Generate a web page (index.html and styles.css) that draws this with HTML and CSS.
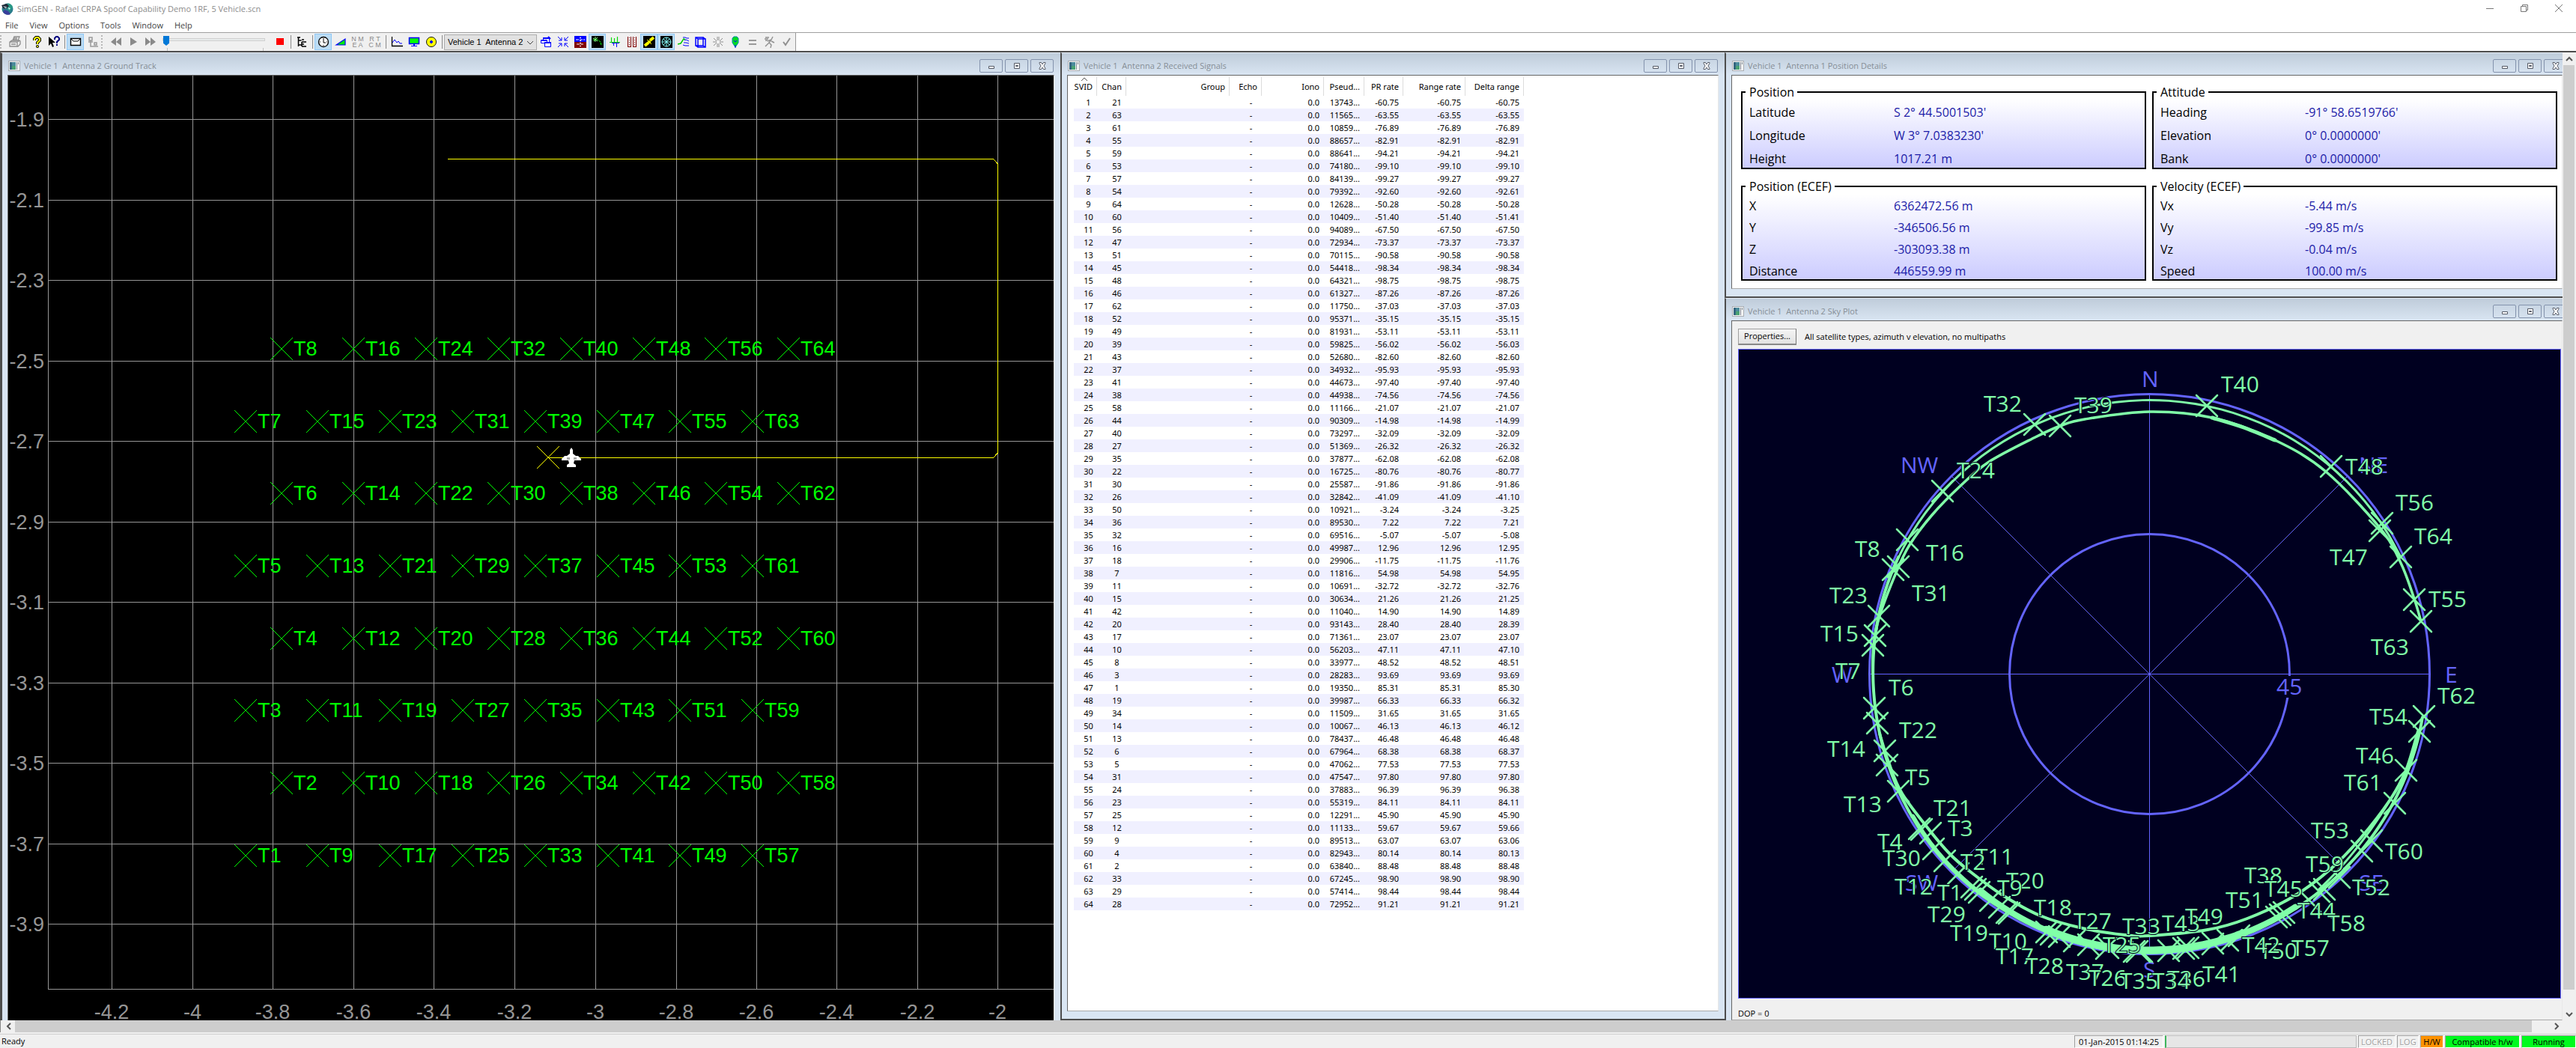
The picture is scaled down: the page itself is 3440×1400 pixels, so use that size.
FILE: index.html
```html
<!DOCTYPE html>
<html lang="en">
<head>
<meta charset="utf-8">
<title>SimGEN - Rafael CRPA Spoof Capability Demo 1RF, 5 Vehicle.scn</title>
<link rel="stylesheet" href="styles.css">
</head>
<body>
<svg class="defs" aria-hidden="true">
  <symbol id="i-win" viewBox="0 0 16 14">
    <rect x="0.5" y="0.5" width="15" height="13" fill="#f4f4f4" stroke="#a8adb3"/>
    <rect x="2" y="2" width="8" height="10" fill="#4d8c9c"/><path d="M2 2h3v10H2z" fill="#35667f"/><path d="M5 7h5v5H5z" fill="#4aa273"/>
    <path d="M11 2h1v10h-1zM13 2h1v3h-1z" fill="#7f8a94"/>
  </symbol>
  <symbol id="i-min" viewBox="0 0 12 12"><path d="M2.500 6.500h7v3h-7z" fill="#fff" stroke="#555a66"/></symbol>
  <symbol id="i-max" viewBox="0 0 12 12"><path d="M2.500 2.500h7v7h-7z" fill="#fff" stroke="#555a66"/><path d="M4.500 5.500h3v1h-3z" fill="#c6d4e3" stroke="#555a66"/></symbol>
  <symbol id="i-close" viewBox="0 0 12 12"><path d="M2 1.500h2.500L6 4l1.500-2.500H10v1L8 6l2 3.500v1H7.500L6 8l-1.500 2.500H2v-1L4 6 2 2.500z" fill="#fff" stroke="#555a66"/></symbol>
</svg>

<header class="titlebar">
  <svg class="logo" viewBox="0 0 16 16" aria-hidden="true"><circle cx="8" cy="8" r="7.500" fill="#2b7d8c"/><path d="M8 .5a7.500 7.500 0 0 1 7 5l-4 6-4-5z" fill="#2a9a86"/><path d="M4 9l5 2 3 4a7.500 7.500 0 0 1-10-3z" fill="#3a3f9b"/><path d="M0 3l7-2 3 3-4 4-4-1z" fill="#222b38"/><path d="M2 4l5 1-1 3z" fill="#9fb7c0"/><path d="M9 6l3 1-2 2z" fill="#dff"/></svg>
  <h1>SimGEN - Rafael CRPA Spoof Capability Demo 1RF, 5 Vehicle.scn</h1>
  <div class="sysbuttons">
    <button aria-label="Minimize"><svg viewBox="0 0 10 10"><path d="M0 5.500h10"/></svg></button>
    <button aria-label="Restore"><svg viewBox="0 0 10 10"><path d="M.5 2.500h7v7h-7zM2.500 2.500v-2h7v7h-2"/></svg></button>
    <button aria-label="Close"><svg viewBox="0 0 10 10"><path d="M0 0l10 10M10 0L0 10"/></svg></button>
  </div>
</header>

<nav class="menubar">
  <button>File</button><button>View</button><button>Options</button><button>Tools</button><button>Window</button><button>Help</button>
</nav>

<div class="toolstrip">
 <div class="toolbar">
  <i class="grip"></i>
  <button aria-label="Print"><svg viewBox="0 0 16 16"><path d="M5 6l2-5h7l-2 5M1 8l3-2h9l2 1v4l-3 3H1zM1 8h10v6M11 8l4-2M3 11h6M6 3h5M6 5h5" fill="none" stroke="#8d8d8d" stroke-width="1.300"/></svg></button>
  <i class="sep"></i>
  <button aria-label="Help"><svg viewBox="0 0 16 16"><path d="M5 6V4l2-2h3l2 2v2l-3 3v2" fill="none" stroke="#000" stroke-width="4"/><path d="M5 6V4l2-2h3l2 2v2l-3 3v2" fill="none" stroke="#ff0" stroke-width="2"/><circle cx="9" cy="14" r="2" fill="#000"/><circle cx="9" cy="14" r="1" fill="#ff0"/></svg></button>
  <button aria-label="Context help"><svg viewBox="0 0 16 16"><path d="M1 1v12l3-3 2 5 2-1-2-5h4z" fill="#000"/><path d="M9 5V3l2-2h2l2 2v2l-3 3v2M11 12h2" fill="none" stroke="#000080" stroke-width="2"/></svg></button>
  <i class="sep"></i>
  <button class="on" aria-label="Messages"><svg viewBox="0 0 16 16"><path d="M1.500 3.500h13v9h-13z" fill="#fff" stroke="#000" stroke-width="1.400"/><path d="M2 4l3 3h6l3-3" fill="none" stroke="#000"/></svg></button>
  <button aria-label="Network"><svg viewBox="0 0 16 16"><path d="M3 2h4v4H3zM2 8h6M5 6v8h4M10 9h3v3h-3zM9 14h6" fill="none" stroke="#9a9a9a" stroke-width="1.500"/></svg></button>
  <i class="grip"></i>
  <button aria-label="Rewind"><svg viewBox="0 0 16 16"><path d="M8 2v11L1 8zM15 2v11L8 8z" fill="#8a8a8a"/></svg></button>
  <button aria-label="Play"><svg viewBox="0 0 16 16"><path d="M4 2l9 6-9 5z" fill="#8a8a8a"/></svg></button>
  <button aria-label="Fast forward"><svg viewBox="0 0 16 16"><path d="M1 2l7 6-7 5zM8 2l7 6-7 5z" fill="#8a8a8a"/></svg></button>
  <div class="slider"><input type="range" min="0" max="100" value="0" aria-label="Run position"></div>
  <button aria-label="Stop"><svg viewBox="0 0 16 16"><path d="M3 3h10v9H3z" fill="#f00"/></svg></button>
  <i class="sep"></i>
  <button aria-label="Source tree"><svg viewBox="0 0 16 16"><path d="M2 2h4M3.500 2v12M3.500 6h4M3.500 12h5M8 5h3M8 8h6M8 11h3M8 14h6M8 8v6" fill="none" stroke="#000" stroke-width="1.500"/></svg></button>
  <i class="sep"></i>
  <button class="on" aria-label="Clock"><svg viewBox="0 0 16 16"><circle cx="8" cy="8" r="6.500" fill="#fff" stroke="#000" stroke-width="1.300"/><path d="M8 3v6h3" fill="none" stroke="#000"/><path d="M3 8h1M12 8h1M8 12v1" stroke="#000"/></svg></button>
  <button aria-label="Power levels"><svg viewBox="0 0 16 16"><path d="M2 12L14 4v8z" fill="#0e0" stroke="#00f" stroke-width="1.200"/></svg></button>
  <button class="mini" aria-label="NMEA"><span>N M</span><span>E A</span></button>
  <button class="mini" aria-label="RTCM"><span>R T</span><span>C M</span></button>
  <i class="sep"></i>
  <button aria-label="Graph"><svg viewBox="0 0 16 16"><path d="M1.500 1v12.500H16" fill="none" stroke="#000" stroke-width="1.300"/><path d="M2 9l3-4 3 4 2-2 2 3 3 0" fill="none" stroke="#00f"/></svg></button>
  <button aria-label="Display"><svg viewBox="0 0 16 16"><path d="M1.500 2.500h13v8h-13z" fill="#0f0" stroke="#00f" stroke-width="1.500"/><path d="M7 11h2v2h3v1H4v-1h3z" fill="#00f"/></svg></button>
  <button aria-label="Constellation"><svg viewBox="0 0 16 16"><circle cx="8" cy="8" r="6.500" fill="#ff0" stroke="#111"/><path d="M6 8h4M8 6v4" stroke="#00f" stroke-width="2"/></svg></button>
  <i class="sep"></i>
  <div class="combo"><select aria-label="Vehicle and antenna"><option>Vehicle 1&nbsp; Antenna 2</option></select><svg viewBox="0 0 10 6" aria-hidden="true"><path d="M1 1l4 4 4-4" fill="none" stroke="#444"/></svg></div>
  <button aria-label="Cascade"><svg viewBox="0 0 16 16"><g fill="#fff" stroke="#00f"><path d="M4.500 2.500h8v6h-8z"/><path d="M1.500 5.500h8v4h-8z"/><path d="M6.500 8.500h8v6h-8z"/></g><path d="M4 3h9M6 9h9M2 6h7M11 1l3 3" stroke="#00f" stroke-width="2"/></svg></button>
  <button aria-label="Collapse"><svg viewBox="0 0 16 16"><path d="M1 1l5 5M2 6h4V2M15 1l-5 5M14 6h-4V2M1 15l5-5M2 10h4v4M15 15l-5-5M14 10h-4v4" fill="none" stroke="#00f"/></svg></button>
  <button aria-label="Split"><svg viewBox="0 0 16 16"><path d="M0 0h16v8H0z" fill="#00f"/><path d="M0 8h16v8H0z" fill="#800000"/><path d="M2 5h12M3 11h10" stroke="#fff" stroke-dasharray="4 1"/><path d="M7 2h2v1H7zM7 6h2v1H7zM7 9h2v1H7zM7 13h2v1H7z" fill="#fff"/></svg></button>
  <button class="on" aria-label="Ground track"><svg viewBox="0 0 16 16"><path d="M0 0h16v16H0z"/><path d="M2 5h6l4 3 1 5" fill="none" stroke="#0f0" stroke-dasharray="3 1"/><path d="M5 1v7M2 3l6 4M8 2L3 7" stroke="#8f8"/></svg></button>
  <button aria-label="Signal bars"><svg viewBox="0 0 16 16"><path d="M1 8.500h14M3.500 8V2M7.500 8V3M11.500 8V1" stroke="#0d0" stroke-width="1.200"/><path d="M4 9.500h10M6.500 9v4M10.500 9v6" stroke="#00f"/></svg></button>
  <button aria-label="Channels"><svg viewBox="0 0 16 16"><path d="M2.500 1v13M6.500 1v13M9.500 1v13M13.500 1v13M2 14.500h5M9 14.500h5" stroke="#800000"/><path d="M4.500 2v11M11.500 2v11" stroke="#800000" stroke-dasharray="1 2"/></svg></button>
  <button class="on" aria-label="Satellite"><svg viewBox="0 0 16 16"><path d="M0 0h16v16H0z"/><path d="M2 13l5-4M9 6l5-4" stroke="#ff0" stroke-width="4"/><path d="M5 5l6 6" stroke="#ff0" stroke-width="1"/><circle cx="8" cy="8" r="2" fill="#ff0"/></svg></button>
  <button class="on" aria-label="Sky plot"><svg viewBox="0 0 16 16"><path d="M0 0h16v16H0z"/><circle cx="8" cy="8" r="6" fill="none" stroke="#8ff"/><path d="M8 2v12M2 8h12M4 4l8 8M12 4l-8 8" stroke="#8ff"/></svg></button>
  <button aria-label="Antenna pattern"><svg viewBox="0 0 16 16"><path d="M0 11l4-1 4-6 2 1" fill="none" stroke="#0c0" stroke-width="1.500"/><path d="M7 2h3l2 1h3M9 6l2-1 4 2M8 9l3 0 4 1M7 12l3 1h5" fill="none" stroke="#00f"/></svg></button>
  <button aria-label="Attitude cube"><svg viewBox="0 0 16 16"><path d="M1 2h10v11H1zM4 4h10v11H4zM1 2l3 2M11 2l3 2M11 13l3 2M1 13l3 2" fill="none" stroke="#00f" stroke-width="1.500"/></svg></button>
  <button aria-label="Burst"><svg viewBox="0 0 16 16"><path d="M7 1v5M9 1v5M7 10v5M9 10v5M1 8h5M10 8h5M2 3l4 4M14 3l-4 4M2 13l4-4M14 13l-4-4" stroke="#909090"/></svg></button>
  <button aria-label="Waypoint"><svg viewBox="0 0 16 16"><path d="M8 15L4 9V3l2-2h4l2 2v6z" fill="#0d2" stroke="#08a"/><path d="M8 16v-4M6 6l2 2 2-2" stroke="#00f" fill="none"/></svg></button>
  <button aria-label="Equals"><svg viewBox="0 0 16 16"><path d="M3 6h10M3 11h10" stroke="#9a9a9a" stroke-width="2"/></svg></button>
  <button aria-label="Motion"><svg viewBox="0 0 16 16"><path d="M12 1l-2 4-5 2M10 5l-3 4 3 3-1 4M7 9l-5 5M10 7l4 2M2 2h5M1 4h5M2 6h3" fill="none" stroke="#909090" stroke-width="1.400"/></svg></button>
  <button aria-label="Apply"><svg viewBox="0 0 16 16"><path d="M3 8l3 4 6-9" fill="none" stroke="#909090" stroke-width="2"/></svg></button>
 </div>
</div>

<main class="workspace">
 <div class="desktop">
  <section class="win ground">
    <header><svg class="wicon"><use href="#i-win"/></svg><h2>Vehicle 1&nbsp; Antenna 2 Ground Track</h2>
      <div class="wbtns"><button aria-label="Minimize"><svg><use href="#i-min"/></svg></button><button aria-label="Maximize"><svg><use href="#i-max"/></svg></button><button aria-label="Close"><svg><use href="#i-close"/></svg></button></div></header>
    <div class="client black"><svg id="track" viewBox="11 101 1396 1262" preserveAspectRatio="xMinYMin slice" role="img" aria-label="Ground track"></svg></div>
  </section>

  <section class="win signals">
    <header><svg class="wicon"><use href="#i-win"/></svg><h2>Vehicle 1&nbsp; Antenna 2 Received Signals</h2>
      <div class="wbtns"><button aria-label="Minimize"><svg><use href="#i-min"/></svg></button><button aria-label="Maximize"><svg><use href="#i-max"/></svg></button><button aria-label="Close"><svg><use href="#i-close"/></svg></button></div></header>
    <div class="client">
      <table>
        <colgroup><col class="c31"><col class="c39"><col class="c138"><col class="c43"><col class="c83"><col class="c54"><col class="c52"><col class="c83"><col class="c78"></colgroup>
        <thead><tr><th class="sorted">SVID<svg viewBox="0 0 8 5" aria-hidden="true"><path d="M0 4l4-4 4 4" fill="none" stroke="#555"/></svg></th><th>Chan</th><th>Group</th><th>Echo</th><th>Iono</th><th>Pseud...</th><th>PR rate</th><th>Range rate</th><th>Delta range</th></tr></thead>
        <tbody id="signals"></tbody>
      </table>
    </div>
  </section>

  <div class="stack">
   <section class="win position">
    <header><svg class="wicon"><use href="#i-win"/></svg><h2>Vehicle 1&nbsp; Antenna 1 Position Details</h2>
      <div class="wbtns"><button aria-label="Minimize"><svg><use href="#i-min"/></svg></button><button aria-label="Maximize"><svg><use href="#i-max"/></svg></button><button aria-label="Close"><svg><use href="#i-close"/></svg></button></div></header>
    <div class="client groups">
      <fieldset><legend>Position</legend><dl><dt>Latitude</dt><dd>S 2° 44.5001503'</dd><dt>Longitude</dt><dd>W 3° 7.0383230'</dd><dt>Height</dt><dd>1017.21 m</dd></dl></fieldset>
      <fieldset><legend>Attitude</legend><dl><dt>Heading</dt><dd>-91° 58.6519766'</dd><dt>Elevation</dt><dd>0° 0.0000000'</dd><dt>Bank</dt><dd>0° 0.0000000'</dd></dl></fieldset>
      <fieldset class="four"><legend>Position (ECEF)</legend><dl><dt>X</dt><dd>6362472.56 m</dd><dt>Y</dt><dd>-346506.56 m</dd><dt>Z</dt><dd>-303093.38 m</dd><dt>Distance</dt><dd>446559.99 m</dd></dl></fieldset>
      <fieldset class="four"><legend>Velocity (ECEF)</legend><dl><dt>Vx</dt><dd>-5.44 m/s</dd><dt>Vy</dt><dd>-99.85 m/s</dd><dt>Vz</dt><dd>-0.04 m/s</dd><dt>Speed</dt><dd>100.00 m/s</dd></dl></fieldset>
    </div>
   </section>
   <section class="win sky">
    <header><svg class="wicon"><use href="#i-win"/></svg><h2>Vehicle 1&nbsp; Antenna 2 Sky Plot</h2>
      <div class="wbtns"><button aria-label="Minimize"><svg><use href="#i-min"/></svg></button><button aria-label="Maximize"><svg><use href="#i-max"/></svg></button><button aria-label="Close"><svg><use href="#i-close"/></svg></button></div></header>
    <div class="client gray">
      <div class="skybar"><button>Properties...</button><span>All satellite types, azimuth v elevation, no multipaths</span></div>
      <div class="skyplot"><svg id="sky" viewBox="2322 467 1097 866" preserveAspectRatio="xMidYMid meet" role="img" aria-label="Sky plot"></svg></div>
      <p class="dop">DOP = 0</p>
    </div>
   </section>
  </div>
 </div>
 <div class="vscroll"><button aria-label="Scroll up"><svg viewBox="0 0 10 10"><path d="M1 7l4-4 4 4"/></svg></button><div class="thumb"></div><button aria-label="Scroll down"><svg viewBox="0 0 10 10"><path d="M1 3l4 4 4-4"/></svg></button></div>
 <div class="hscroll"><button aria-label="Scroll left"><svg viewBox="0 0 10 10"><path d="M7 1L3 5l4 4"/></svg></button><div class="thumb"></div><button aria-label="Scroll right"><svg viewBox="0 0 10 10"><path d="M3 1l4 4-4 4"/></svg></button></div>
</main>

<footer class="status">
  <span class="ready">Ready</span>
  <span class="pane date">01-Jan-2015 01:14:25</span>
  <span class="pane progress"></span>
  <span class="pane off locked">LOCKED</span>
  <span class="pane off log">LOG</span>
  <span class="pane hw">H/W</span>
  <span class="pane ok compat">Compatible h/w</span>
  <span class="pane ok running">Running</span>
</footer>
<script src="script.js"></script>
</body>
</html>
```
FILE: styles.css
```css
* { box-sizing: border-box; }
html, body { height: 100%; }
body {
  margin: 0;
  display: flex;
  flex-direction: column;
  min-height: 600px;
  background: #fff;
  color: #000;
  font: 11px/16px "Open Sans", "Noto Sans", sans-serif;
  overflow: hidden;
}
h1, h2, p, dl, dd { margin: 0; font-weight: normal; }
button { font: inherit; color: inherit; padding: 0; border: 0; background: none; }
.defs { position: absolute; width: 0; height: 0; }

.titlebar { display: flex; align-items: center; height: 24px; padding-left: 2px; gap: 5px; color: #8c8c8c; background: #fff; flex: none; }
.titlebar h1 { font-size: 11px; line-height: 16px; }
.logo { width: 16px; height: 16px; }
.sysbuttons { margin-left: auto; display: flex; }
.sysbuttons button { width: 46px; height: 20px; }
.sysbuttons svg { width: 10px; height: 10px; fill: none; stroke: #777; }

.menubar { display: flex; gap: 15px; padding-left: 7px; height: 19px; color: #444; flex: none; }
.menubar button { line-height: 18px; }

.toolstrip { flex: none; height: 27px; border-top: 1px solid #a0a0a0; border-bottom: 2px solid #4d4d4d; display: flex; background: #fff; }
.toolbar { display: flex; align-items: center; background: #f0f0f0; border-right: 1px solid #999; }
.toolbar button { width: 23px; height: 22px; display: flex; align-items: center; justify-content: center; flex: none; }
.toolbar button svg { width: 16px; height: 16px; }
.toolbar button.on { background: #bcdcf4; border: 1px solid #90c8f6; }
.toolbar button.mini { flex-direction: column; font: 9px/8px "Liberation Sans", sans-serif; color: #8a8a8a; }
.grip { width: 8px; height: 18px; border-left: 2px dotted #b8b8b8; border-right: 4px solid transparent; }
.sep { width: 6px; height: 18px; background: linear-gradient(#8a8a8a, #8a8a8a) center / 1px 100% no-repeat; }
.slider { width: 150px; height: 23px; padding: 2px 8px 0 5px; position: relative; }
.slider::after { content: ""; position: absolute; left: 11px; right: 10px; bottom: 0; height: 4px; border: solid #c0c0c0; border-width: 0 1px; }
.slider input { appearance: none; display: block; width: 100%; height: 13px; margin: 0; background: none; }
.slider input::-webkit-slider-runnable-track { height: 4px; background: #e7eaea; border: 1px solid #d0d0d0; }
.slider input::-webkit-slider-thumb { appearance: none; width: 8px; height: 13px; margin-top: -4px; background: #0078d7; clip-path: polygon(0 0, 100% 0, 100% 75%, 50% 100%, 0 75%); }
.combo { position: relative; width: 124px; height: 21px; }
.combo select { appearance: none; width: 100%; height: 100%; padding: 0 4px; border: 1px solid #adadad; border-radius: 0; background: #e1e1e1; color: #000; font: 11px/16px "Liberation Sans", Arial, sans-serif; }
.combo svg { position: absolute; right: 4px; top: 8px; width: 10px; height: 6px; }

.workspace { flex: 1; min-height: 0; display: grid; grid-template: minmax(0, 1fr) 18px / minmax(0, 1fr) 18px; background: #f0f0f0; }
.desktop { display: grid; grid-template: minmax(0, 1fr) / minmax(0, 1416fr) minmax(0, 887fr) minmax(0, 1119fr); background: #fff; overflow: hidden; }

.win { display: flex; flex-direction: column; min-height: 0; min-width: 0; border-left: 2px solid #4d4d4d; border-top: 1px solid #e6edf5; padding: 0 8px 10px 7px; background: #d9e5f2; }
.win > header { display: flex; align-items: center; gap: 5px; flex: none; height: 29px; margin: 0 -8px 0 -7px; padding: 5px 9px 0 8px; color: #868e96; background: linear-gradient(#bfccda, #d9e5f2); }
.win h2 { font-size: 11px; line-height: 16px; white-space: nowrap; }
.wicon { width: 16px; height: 14px; flex: none; }
.wbtns { margin-left: auto; display: flex; gap: 3px; }
.wbtns button { width: 31px; height: 18px; display: flex; align-items: center; justify-content: center; border: 1px solid #8493ad; border-radius: 2px; background: linear-gradient(#c9d6e4, #d6e2ef); }
.wbtns svg { width: 12px; height: 12px; }
.client { flex: 1; min-height: 0; border: 1px solid #666; border-right-color: #e8e8e8; border-bottom-color: #aaa; background: #fff; overflow: hidden; }
.client.gray { background: #f0f0f0; }
.client.black { background: #000; }
.client > svg { display: block; width: 100%; height: 100%; }
.ground { padding-bottom: 0; border-left-width: 3px; }
.ground .client { border-bottom: 0; }
.signals { border-bottom: 2px solid #4d4d4d; }
.stack { display: flex; flex-direction: column; min-height: 0; }
.stack .win { padding-right: 0; }
.stack .win > header { margin-right: -6px; padding-right: 0; }
.position { flex: 0 0 328px; border-bottom: 2px solid #4d4d4d; }
.sky { flex: 1; padding-bottom: 0; }
.sky .client { display: flex; flex-direction: column; padding: 0 1px 0 8px; }

table { border-collapse: collapse; table-layout: fixed; width: 601px; margin: 2px 0 0 8px; font: 11px/17px "Noto Sans", "Open Sans", sans-serif; }
.c31 { width: 31px; } .c39 { width: 39px; } .c138 { width: 138px; } .c43 { width: 43px; } .c83 { width: 83px; }
.c54 { width: 54px; } .c52 { width: 52px; } .c78 { width: 78px; }
th { height: 25px; padding: 0 6px 0 0; text-align: right; font-weight: normal; white-space: nowrap; box-shadow: inset -1px 0 #dcdcdc; }
th.sorted { position: relative; }
th.sorted svg { position: absolute; left: 10px; top: 1px; width: 8px; height: 5px; }
td { height: 17px; padding: 0 6px 0 0; text-align: right; white-space: nowrap; }
td:nth-child(1), td:nth-child(2), td:nth-child(4) { text-align: center; padding: 0 0 0 14px; }
td:nth-child(1) { padding-left: 8px; }
tbody tr:nth-child(even) { background: #f0f0ff; }

.groups { display: grid; grid-template: 114px 137px / minmax(0, 1fr) minmax(0, 1fr); gap: 12px 8px; padding: 11px 6px 0 12px; font-size: 16px; line-height: 22px; align-content: start; }
fieldset { margin: 0; min-width: 0; min-height: 0; padding: 0 9px; border: 2px solid #000; background: linear-gradient(#fff 8%, #ccf); }
legend { line-height: 22px; margin-left: -5px; padding: 0 4px 0 5px; }
dl { display: grid; grid-template-columns: 193px 1fr; grid-auto-rows: 31px; align-items: center; }
.four dl { grid-auto-rows: 29px; }
dd { color: #1c1ca8; }

.skybar { display: flex; align-items: center; gap: 11px; height: 37px; flex: none; padding-top: 4px; }
.skybar button { width: 78px; height: 22px; border: 1px solid #a0a0a0; border-right-color: #777; border-bottom: 2px solid #888; background: linear-gradient(#f4f4f4, #e2e2e2); }
.skyplot { flex: 1; min-height: 0; border: 1px solid #6464ff; background: #000020; }
.skyplot svg { display: block; width: 100%; height: 100%; }
.dop { flex: none; height: 28px; padding-top: 12px; line-height: 16px; }

.vscroll { display: flex; flex-direction: column; background: #f0f0f0; }
.hscroll { display: flex; grid-column: 1; background: #f0f0f0; height: 16px; padding-left: 2px; border-left: 1px solid #888; }
.vscroll button { height: 17px; }
.hscroll button { width: 17px; }
.vscroll button, .hscroll button { display: flex; align-items: center; justify-content: center; flex: none; }
.vscroll svg, .hscroll svg { width: 10px; height: 10px; fill: none; stroke: #555; stroke-width: 2; }
.thumb { flex: 1; background: #cdcdcd; }
.vscroll .thumb { margin: 0 2px 24px 1px; }
.hscroll .thumb { margin-right: 24px; }

.status { flex: none; height: 19px; display: flex; align-items: center; gap: 2px; background: #f0f0f0; border-top: 1px solid #d0d0d0; padding-left: 2px; }
.ready { margin-right: auto; }
.pane { height: 17px; border: 1px solid #a0a0a0; border-right-color: #fff; border-bottom-color: #fff; line-height: 16px; text-align: center; white-space: nowrap; overflow: hidden; }
.date { width: 119px; }
.progress { width: 256px; background: #e6e6e6; border: 1px solid #bcbcbc; border-left: 2px solid #3fb55d; }
.off { color: #a0a0a0; text-shadow: 1px 1px #fff; }
.locked { width: 50px; } .log { width: 29px; }
.hw { width: 31px; background: #ff9200; }
.ok { background: #00fa1e; }
.compat { width: 100px; } .running { width: 73px; }

.gridline { stroke: #969696; fill: none; shape-rendering: crispEdges; }
.axis { fill: #969696; font: 27px "Liberation Sans", Arial, sans-serif; }
.tx { fill: #0f0; font: 27px "Liberation Sans", Arial, sans-serif; }
.txmark { stroke: #0f0; fill: none; shape-rendering: crispEdges; }
.route { stroke: #ff0; fill: none; shape-rendering: crispEdges; }
.polar { stroke: #6464ff; fill: none; }
.compass { fill: #6464ff; font: 30px "Open Sans", "Noto Sans", sans-serif; }
.trace { stroke: #80ffa8; fill: none; stroke-linecap: round; stroke-linejoin: round; }
.satlabel { fill: #80ffa8; stroke: #000020; stroke-width: 2px; paint-order: stroke; font: 30px "Open Sans", "Noto Sans", sans-serif; }
```
FILE: script.js
```js
const NS = "http://www.w3.org/2000/svg";
function add(parent, tag, attrs, text) {
  const el = document.createElementNS(NS, tag);
  for (const k in attrs) el.setAttribute(k, attrs[k]);
  if (text) el.textContent = text;
  parent.appendChild(el);
}
const cross = (x, y, r) => `M${x - r} ${y - r}L${x + r} ${y + r}M${x + r} ${y - r}L${x - r} ${y + r}`;

/* Received signals: channel, pseudorange, PR rate, delta range */
const rows = `21 13743 -60.75 -60.75|63 11565 -63.55 -63.55|61 10859 -76.89 -76.89|55 88657 -82.91 -82.91|59 88641 -94.21 -94.21|53 74180 -99.10 -99.10|57 84139 -99.27 -99.27|54 79392 -92.60 -92.61|64 12628 -50.28 -50.28|60 10409 -51.40 -51.41|56 94089 -67.50 -67.50|47 72934 -73.37 -73.37|51 70115 -90.58 -90.58|45 54418 -98.34 -98.34|48 64321 -98.75 -98.75|46 61327 -87.26 -87.26|62 11750 -37.03 -37.03|52 95371 -35.15 -35.15|49 81931 -53.11 -53.11|39 59825 -56.02 -56.03|43 52680 -82.60 -82.60|37 34932 -95.93 -95.93|41 44673 -97.40 -97.40|38 44938 -74.56 -74.56|58 11166 -21.07 -21.07|44 90309 -14.98 -14.99|40 73297 -32.09 -32.09|27 51369 -26.32 -26.32|35 37877 -62.08 -62.08|22 16725 -80.76 -80.77|30 25587 -91.86 -91.86|26 32842 -41.09 -41.10|50 10921 -3.24 -3.25|36 89530 7.22 7.21|32 69516 -5.07 -5.08|16 49987 12.96 12.95|18 29906 -11.75 -11.76|7 11816 54.98 54.95|11 10691 -32.72 -32.76|15 30634 21.26 21.25|42 11040 14.90 14.89|20 93143 28.40 28.39|17 71361 23.07 23.07|10 56203 47.11 47.10|8 33977 48.52 48.51|3 28283 93.69 93.69|1 19350 85.31 85.30|19 39987 66.33 66.32|34 11509 31.65 31.65|14 10067 46.13 46.12|13 78437 46.48 46.48|6 67964 68.38 68.37|5 47062 77.53 77.53|31 47547 97.80 97.80|24 37883 96.39 96.38|23 55319 84.11 84.11|25 12291 45.90 45.90|12 11133 59.67 59.66|9 89513 63.07 63.06|4 82943 80.14 80.13|2 63840 88.48 88.48|33 67245 98.90 98.90|29 57414 98.44 98.44|28 72952 91.21 91.21`.split("|");
document.getElementById("signals").innerHTML = rows.map((r, i) => {
  const [chan, pr, rate, delta] = r.split(" ");
  return `<tr><td>${i + 1}</td><td>${chan}</td><td></td><td>-</td><td>0.0</td><td>${pr}...</td><td>${rate}</td><td>${rate}</td><td>${delta}</td></tr>`;
}).join("");

/* Ground track */
const track = document.getElementById("track");
const xs = [149, 257, 364, 472, 579, 687, 795, 903, 1010, 1117, 1225, 1332];
const ys = [159, 267, 374, 482, 589, 697, 804, 912, 1019, 1127, 1234];
let grid = "M64.500 101V1321.500H1408";
xs.forEach(x => grid += `M${x + 0.5} 101V1321`);
ys.forEach(y => grid += `M65 ${y + 0.5}H1408`);
add(track, "path", { d: grid, class: "gridline" });
["-4.2", "-4", "-3.8", "-3.6", "-3.4", "-3.2", "-3", "-2.8", "-2.6", "-2.4", "-2.2", "-2"].forEach((t, i) =>
  add(track, "text", { x: xs[i], y: 1361, "text-anchor": "middle", class: "axis" }, t));
ys.forEach((y, i) => add(track, "text", { x: 59, y: y + 10, "text-anchor": "end", class: "axis" }, "-" + (1.9 + i * 0.2).toFixed(1)));
for (let n = 1; n <= 64; n++) {
  const row = (n - 1) % 8, col = Math.floor((n - 1) / 8);
  const x = Math.round((row % 2 ? 375.6 : 327.6) + col * 96.8), y = Math.round(1142.7 - row * 96.67);
  add(track, "path", { d: cross(x, y, 15), class: "txmark" });
  add(track, "text", { x: x + 16, y: y + 9, class: "tx" }, "T" + n);
}
add(track, "path", { d: "M598 212.500H1326.500L1332.500 219V605L1326.500 611.500H732" + cross(732, 611, 15), class: "route" });
add(track, "path", { d: "M763 598l2 3v5l4 3h3l4 4v2h-9l-1 4 3 2v3h-12v-3l3-2-1-4h-9v-2l4-4h3l4-3v-5z", fill: "#fff" });
add(track, "path", { d: "M757 611h4v3h-4zM766 611h4v3h-4z", fill: "#aaa" });

/* Sky plot */
const sky = document.getElementById("sky");
const cx = 2870.5, cy = 900.5;
add(sky, "path", { d: `M${cx} 526V1275M2496 ${cy}H3245M2606 636L3135 1165M3135 636L2606 1165`, class: "polar" });
add(sky, "circle", { cx, cy, r: 374, class: "polar", "stroke-width": 3 });
add(sky, "circle", { cx, cy, r: 187, class: "polar", "stroke-width": 3 });
add(sky, "rect", { x: 3040, y: 903, width: 34, height: 29, fill: "#000020" });
[["N", 2860, 517], ["NW", 2538, 632], ["NE", 3150, 632], ["W", 2446, 912], ["E", 3265, 912], ["45", 3040, 928], ["S", 2862, 1306], ["SW", 2544, 1190], ["SE", 3150, 1190]]
  .forEach(([t, x, y]) => add(sky, "text", { x, y, class: "compass" }, t));

function smooth(pts) {
  let d = `M${pts[0]}`;
  for (let i = 0; i < pts.length - 1; i++) {
    const p0 = pts[i - 1] || pts[i], p1 = pts[i], p2 = pts[i + 1], p3 = pts[i + 2] || p2;
    d += `C${p1[0] + (p2[0] - p0[0]) / 6} ${p1[1] + (p2[1] - p0[1]) / 6} ${p2[0] - (p3[0] - p1[0]) / 6} ${p2[1] - (p3[1] - p1[1]) / 6} ${p2}`;
  }
  return d;
}
/* points on a circle about the plot centre, angles in degrees clockwise from north */
function arc(from, to, r1, r2) {
  const pts = [], n = 24;
  for (let i = 0; i <= n; i++) {
    const a = (from + (to - from) * i / n) * Math.PI / 180, r = r1 + (r2 - r1) * Math.sin(Math.PI * i / n);
    pts.push([cx + r * Math.sin(a), cy - r * Math.cos(a)]);
  }
  return smooth(pts);
}
[
  [arc(-68, 65, 370, 366), 3],
  [smooth([[3233, 830], [3224, 800], [3206, 752], [3178, 705], [3106, 630], [3038, 588], [2954, 558], [2870, 550], [2784, 560], [2751, 569], [2718, 584], [2656, 617], [2618, 649], [2580, 688], [2550, 728], [2532, 765], [2510, 823], [2502, 862], [2501, 900]]), 3.5],
  [smooth([[3038, 588], [2996, 571], [2954, 558]]), 5],
  [arc(-65, -82, 370, 370), 4],
  [arc(-80, -121, 370, 369), 4],
  [arc(-121, -150, 369, 370), 6],
  [arc(-142, -212, 367, 370), 8],
  [arc(-158, -200, 368, 369), 10],
  [arc(-212, -261, 369, 368), 4],
  [arc(-218, -250, 366, 361), 3],
  [smooth([[2510, 980], [2522, 1018], [2540, 1060], [2579, 1112], [2605, 1142], [2628, 1162], [2673, 1195], [2724, 1223], [2781, 1240], [2838, 1249], [2870, 1250], [2948, 1242], [3001, 1227], [3062, 1198], [3111, 1162], [3152, 1120], [3192, 1068], [3213, 1029], [3229, 977]]), 4]
].forEach(([d, w]) => add(sky, "path", { d, class: "trace", "stroke-width": w }));

const marks = [[2717, 567], [2751, 569], [2947, 542], [3113, 623], [3178, 709], [3181, 699], [2594, 656], [2547, 721], [2535, 757], [2528, 761], [2509, 823], [2504, 849], [2501, 862], [3206, 744], [3224, 801], [3233, 830], [2503, 946], [2507, 966], [2517, 1003], [2520, 1022], [2535, 1057], [3237, 957], [3231, 977], [3213, 1029], [3198, 1073], [3167, 1123], [3154, 1137], [3124, 1172], [3104, 1188]];
marks.forEach(([x, y]) => add(sky, "path", { d: cross(x, y, 14), class: "trace", "stroke-width": 2.5 }));
/* single strokes where the satellites crowd together: rising to the right in the south west, falling in the south east */
const rise = [[2563, 1107], [2566, 1108], [2578, 1113], [2582, 1134], [2597, 1150], [2615, 1167], [2633, 1185], [2638, 1188], [2643, 1192], [2658, 1203], [2670, 1212], [2680, 1219], [2683, 1220], [2733, 1245], [2739, 1248], [2750, 1251], [2770, 1257], [2789, 1262], [2813, 1267], [2850, 1271], [2854, 1271], [2896, 1270], [2916, 1267], [2922, 1266], [2955, 1261], [2980, 1256], [2990, 1250]];
const fall = [[2733, 1245], [2750, 1251], [2789, 1262], [2815, 1266], [2857, 1271], [2860, 1271], [2896, 1270], [2916, 1267], [2922, 1266], [2955, 1260], [2975, 1256], [3040, 1225], [3045, 1222], [3050, 1219], [3085, 1204], [3098, 1192]];
rise.forEach(([x, y]) => add(sky, "path", { d: `M${x - 14} ${y + 14}L${x + 14} ${y - 14}`, class: "trace", "stroke-width": 2.5 }));
fall.forEach(([x, y]) => add(sky, "path", { d: `M${x - 14} ${y - 14}L${x + 14} ${y + 14}`, class: "trace", "stroke-width": 2.5 }));

const labels = `40 2966 524,32 2649 550,39 2770 552,24 2613 639,48 3132 634,56 3199 682,64 3224 727,47 3111 755,8 2477 744,16 2572 749,23 2443 806,31 2553 803,15 2431 857,7 2451 907,6 2522 929,55 3243 811,63 3166 875,62 3255 940,54 3164 968,46 3146 1020,61 3130 1056,53 3086 1120,60 3185 1148,59 3079 1165,52 3141 1196,22 2536 986,14 2440 1011,5 2544 1049,13 2462 1085,21 2582 1090,3 2601 1117,30 2514 1157,4 2507 1135,11 2638 1155,2 2618 1162,12 2530 1195,1 2587 1203,20 2679 1187,9 2667 1197,29 2574 1232,19 2604 1257,10 2656 1268,17 2665 1288,18 2716 1223,27 2769 1241,28 2705 1301,37 2759 1309,26 2789 1317,25 2808 1273,33 2834 1248,36 2894 1318,35 2831 1321,34 2874 1321,43 2887 1244,49 2918 1235,41 2941 1312,50 3017 1281,42 2994 1273,57 3060 1277,51 2972 1213,38 2997 1180,45 3024 1198,44 3068 1227,58 3108 1244`;
labels.split(",").forEach(l => {
  const [n, x, y] = l.split(" ");
  add(sky, "text", { x, y, class: "satlabel" }, "T" + n);
});
```
